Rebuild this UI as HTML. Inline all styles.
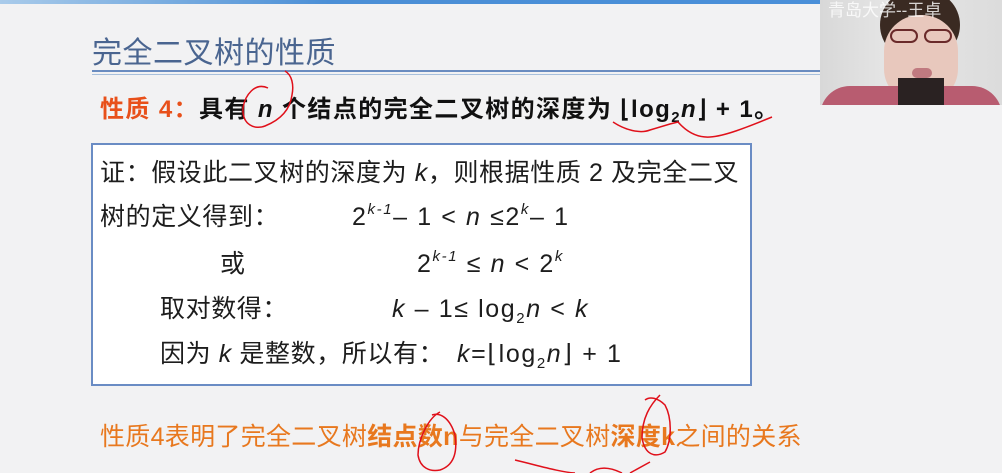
<!DOCTYPE html>
<html><head><meta charset="utf-8"><style>
*{margin:0;padding:0;box-sizing:border-box}
body{width:1002px;height:473px;background:#f2f2f3;position:relative;overflow:hidden;font-family:"Liberation Sans","Noto Sans CJK SC",sans-serif;}
.a{position:absolute;white-space:nowrap}
.i{font-style:italic}
sup{font-size:15px;vertical-align:0;position:relative;top:-11px}
sub{font-size:15px;vertical-align:0;position:relative;top:6px}
.bx span{position:absolute;white-space:nowrap;font-size:25px;color:#1d1d1d;line-height:30px;letter-spacing:0.6px}
.bx span.m{letter-spacing:1.6px}
</style></head><body>
<div class="a" style="left:0;top:0;width:820px;height:4px;background:linear-gradient(90deg,#a9cbea,#4b8fd6 40%,#4a8fd8)"></div>
<div class="a" style="left:92px;top:28px;font-size:30px;color:#4a6590;letter-spacing:0.5px">完全二叉树的性质</div>
<div class="a" style="left:92px;top:70px;width:728px;height:2px;background:#6a8cc0"></div>
<div class="a" style="left:92px;top:74px;width:728px;height:1px;background:#a8c0dc"></div>
<div class="a" style="left:100px;top:89px;font-size:24px;font-weight:bold;color:#111;letter-spacing:1.4px"><span style="color:#e8501a">性质 4：</span>具有 <span class="i">n</span> 个结点的完全二叉树的深度为 ⌊log<sub style="top:5px">2</sub><span class="i">n</span>⌋ + 1。</div>
<div class="a bx" style="left:91px;top:143px;width:661px;height:243px;background:#fff;border:2px solid #6a8cc4">
<span style="left:7px;top:13px">证：假设此二叉树的深度为 <i>k</i>，则根据性质 2 及完全二叉</span>
<span style="left:7px;top:57px">树的定义得到：</span>
<span class="m" style="left:259px;top:57px">2<sup class="i">k-1</sup>– 1 &lt; <i>n</i> ≤2<sup class="i">k</sup>– 1</span>
<span style="left:127px;top:104px">或</span>
<span class="m" style="left:324px;top:104px">2<sup class="i">k-1</sup> ≤ <i>n</i> &lt; 2<sup class="i">k</sup></span>
<span style="left:67px;top:149px">取对数得：</span>
<span class="m" style="left:299px;top:149px"><i>k</i> – 1≤ log<sub>2</sub><i>n</i> &lt; <i>k</i></span>
<span style="left:67px;top:194px">因为 <i>k</i> 是整数，所以有：</span>
<span class="m" style="left:364px;top:194px"><i>k</i>=⌊log<sub>2</sub><i>n</i>⌋ + 1</span>
</div>
<div class="a" style="left:100px;top:417px;font-size:25px;color:#e8781e;letter-spacing:0.3px">性质4表明了完全二叉树<b>结点数n</b>与完全二叉树<b>深度k</b>之间的关系</div>
<div class="a" style="left:820px;top:0;width:182px;height:105px;background:linear-gradient(90deg,#d8d8d8,#e6e6e6 40%,#dcdcdc);overflow:hidden">
<div class="a" style="left:60px;top:-10px;width:80px;height:70px;border-radius:40px;background:#3a2a22"></div>
<div class="a" style="left:64px;top:15px;width:74px;height:88px;border-radius:36px 36px 34px 34px;background:#e8c8bd"></div>
<div class="a" style="left:0;top:86px;width:182px;height:30px;border-radius:50px 50px 0 0;background:#b85c70"></div>
<div class="a" style="left:78px;top:78px;width:46px;height:27px;background:#2a2222"></div>
<div class="a" style="left:70px;top:29px;width:28px;height:14px;border:2px solid #6a2a2a;border-radius:7px"></div>
<div class="a" style="left:104px;top:29px;width:28px;height:14px;border:2px solid #6a2a2a;border-radius:7px"></div>
<div class="a" style="left:92px;top:68px;width:20px;height:10px;border-radius:6px;background:#c07a80"></div>
<div class="a" style="left:8px;top:-4px;font-size:17px;color:#fff;opacity:.8">青岛大学--王卓</div>
</div>
<svg class="a" style="left:0;top:0" width="1002" height="473" fill="none" stroke="#e0101a" stroke-width="1.5">
<path d="M268 88 C255 82 245 95 243 108 C242 125 255 130 265 126 C280 120 290 110 292 95 C294 85 292 75 285 71"/>
<path d="M613 122 C625 130 640 134 650 130 L670 124 L678 122 C685 130 695 138 710 137 C725 136 745 128 772 117"/>
<path d="M440 412 C428 418 418 440 418 455 C420 468 430 472 440 470 C452 466 458 455 455 435 C450 418 440 412 432 415"/>
<path d="M660 395 C650 405 642 418 642 438 C645 455 655 458 665 452 C672 440 672 418 665 405 C658 398 650 396 645 400"/>
<path d="M515 460 C540 466 560 472 575 473 M590 473 C600 465 612 468 622 473 M630 473 L650 462"/>
</svg>
</body></html>
